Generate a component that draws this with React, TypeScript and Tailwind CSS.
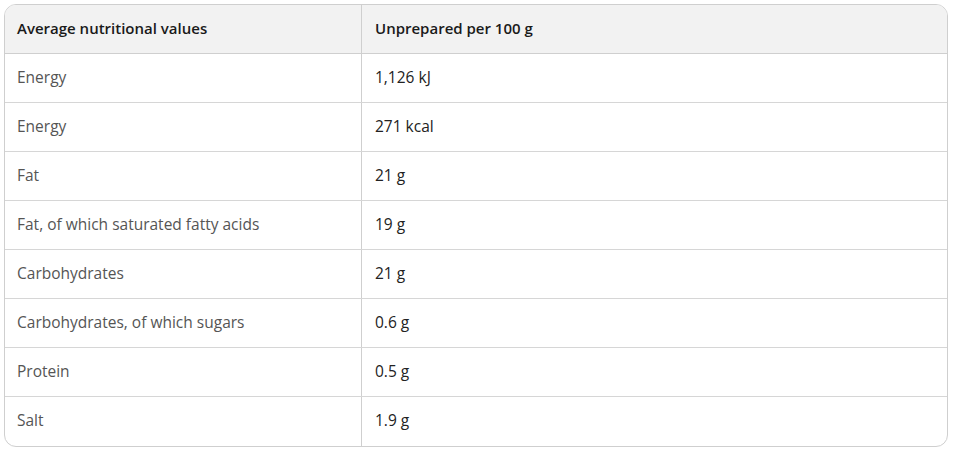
const rows = [
  ["Energy", "1,126 kJ"],
  ["Energy", "271 kcal"],
  ["Fat", "21 g"],
  ["Fat, of which saturated fatty acids", "19 g"],
  ["Carbohydrates", "21 g"],
  ["Carbohydrates, of which sugars", "0.6 g"],
  ["Protein", "0.5 g"],
  ["Salt", "1.9 g"],
]

export default function App() {
  return (
    <div className="bg-white w-[962px] h-[464px] pt-[4px] pl-[4px]" style={{ fontFamily: '"Open Sans", "Noto Sans", sans-serif' }}>
      <div className="w-[944px] border border-[#cfcfcf] rounded-[12px] overflow-hidden">
        {/* Header */}
        <div className="flex h-[49px] bg-[#f2f2f2] border-b border-[#cfcfcf] text-[15px] font-semibold text-[#1a1a1a]">
          <div className="w-[357px] border-r border-[#cfcfcf] flex items-center pl-[12px] pb-[1px]">Average nutritional values</div>
          <div className="flex-1 flex items-center pl-[13px] pb-[1px]">Unprepared per 100 g</div>
        </div>
        {rows.map((r, i) => (
          <div
            key={i}
            className={`flex h-[49px] text-[15.5px] ${i < rows.length - 1 ? "border-b border-[#d6d6d6]" : ""}`}
          >
            <div className="w-[357px] border-r border-[#cfcfcf] flex items-center pl-[12px] pb-[1px] text-[#555555]">{r[0]}</div>
            <div className="flex-1 flex items-center pl-[13px] pb-[1px] text-[#222222]">{r[1]}</div>
          </div>
        ))}
      </div>
    </div>
  )
}
